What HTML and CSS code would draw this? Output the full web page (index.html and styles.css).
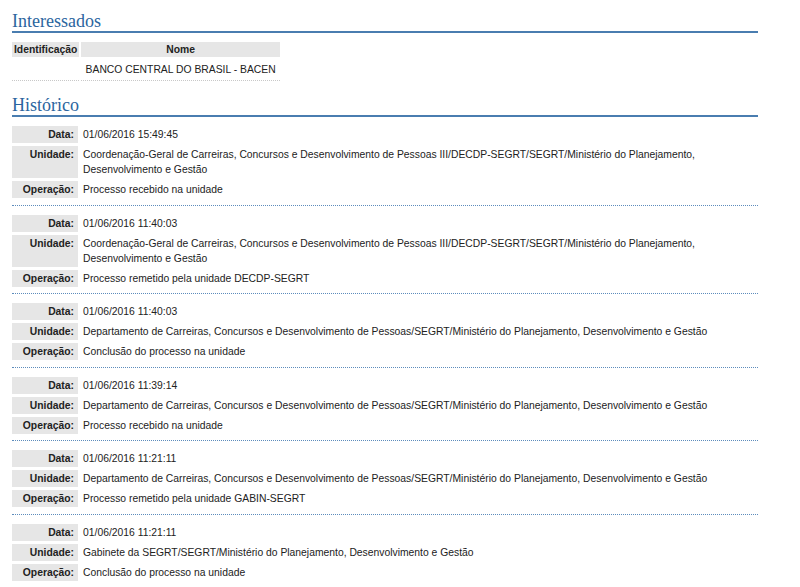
FILE: index.html
```html
<!DOCTYPE html>
<html lang="pt">
<head>
<meta charset="utf-8">
<title>Processo</title>
<link rel="stylesheet" href="styles.css">
</head>
<body>
<div class="page">
  <h2 class="section-title">Interessados</h2>
  <table class="int-table">
    <thead>
      <tr><th class="col-id">Identificação</th><th class="col-nome">Nome</th></tr>
    </thead>
    <tbody>
      <tr><td class="col-id"></td><td class="col-nome">BANCO CENTRAL DO BRASIL - BACEN</td></tr>
    </tbody>
  </table>

  <h2 class="section-title hist-title">Histórico</h2>

  <div class="entry">
    <div class="lbl">Data:</div><div class="val">01/06/2016 15:49:45</div>
    <div class="lbl">Unidade:</div><div class="val">Coordenação-Geral de Carreiras, Concursos e Desenvolvimento de Pessoas III/DECDP-SEGRT/SEGRT/Ministério do Planejamento, Desenvolvimento e Gestão</div>
    <div class="lbl">Operação:</div><div class="val">Processo recebido na unidade</div>
  </div>
  <div class="entry">
    <div class="lbl">Data:</div><div class="val">01/06/2016 11:40:03</div>
    <div class="lbl">Unidade:</div><div class="val">Coordenação-Geral de Carreiras, Concursos e Desenvolvimento de Pessoas III/DECDP-SEGRT/SEGRT/Ministério do Planejamento, Desenvolvimento e Gestão</div>
    <div class="lbl">Operação:</div><div class="val">Processo remetido pela unidade DECDP-SEGRT</div>
  </div>
  <div class="entry">
    <div class="lbl">Data:</div><div class="val">01/06/2016 11:40:03</div>
    <div class="lbl">Unidade:</div><div class="val">Departamento de Carreiras, Concursos e Desenvolvimento de Pessoas/SEGRT/Ministério do Planejamento, Desenvolvimento e Gestão</div>
    <div class="lbl">Operação:</div><div class="val">Conclusão do processo na unidade</div>
  </div>
  <div class="entry">
    <div class="lbl">Data:</div><div class="val">01/06/2016 11:39:14</div>
    <div class="lbl">Unidade:</div><div class="val">Departamento de Carreiras, Concursos e Desenvolvimento de Pessoas/SEGRT/Ministério do Planejamento, Desenvolvimento e Gestão</div>
    <div class="lbl">Operação:</div><div class="val">Processo recebido na unidade</div>
  </div>
  <div class="entry">
    <div class="lbl">Data:</div><div class="val">01/06/2016 11:21:11</div>
    <div class="lbl">Unidade:</div><div class="val">Departamento de Carreiras, Concursos e Desenvolvimento de Pessoas/SEGRT/Ministério do Planejamento, Desenvolvimento e Gestão</div>
    <div class="lbl">Operação:</div><div class="val">Processo remetido pela unidade GABIN-SEGRT</div>
  </div>
  <div class="entry">
    <div class="lbl">Data:</div><div class="val">01/06/2016 11:21:11</div>
    <div class="lbl">Unidade:</div><div class="val">Gabinete da SEGRT/SEGRT/Ministério do Planejamento, Desenvolvimento e Gestão</div>
    <div class="lbl">Operação:</div><div class="val">Conclusão do processo na unidade</div>
  </div>
</div>
</body>
</html>
```

FILE: styles.css
```css
html, body {
  margin: 0;
  padding: 0;
  background: #ffffff;
}

.page {
  width: 746px;
  margin-left: 12px;
  font-family: "Liberation Sans", Arial, sans-serif;
  font-size: 10.35px;
  color: #222222;
}

.section-title {
  margin: 11px 0 0 0;
  padding: 0;
  font-family: "Liberation Serif", "Times New Roman", serif;
  font-weight: normal;
  font-size: 18px;
  line-height: 20px;
  color: #2b659e;
  border-bottom: 2px solid #4a7db0;
}

.hist-title {
  margin-top: 14px;
}

.int-table {
  margin-top: 9px;
  border-collapse: separate;
  border-spacing: 2px 0;
  margin-left: -2px;
  width: 272px;
}

.int-table th {
  background: #e6e6e6;
  font-weight: bold;
  line-height: 15px;
  padding: 0 2px;
  color: #222222;
}

.int-table th.col-id {
  width: 61px;
}

.int-table td {
  line-height: 15px;
  padding: 5px 2px 3px 2px;
  border-bottom: 1px dotted #c8c8c8;
}

.int-table td.col-nome {
  text-align: center;
}

.entry {
  display: grid;
  grid-template-columns: 66px 1fr;
  column-gap: 2px;
  row-gap: 3px;
  padding: 9px 0 6.5px 0;
  border-bottom: 1px dotted #5d8cbc;
}

.entry:last-child {
  border-bottom: none;
}

.lbl {
  background: #e6e6e6;
  font-weight: bold;
  text-align: right;
  padding: 1px 4px 1px 0;
  line-height: 15px;
}

.val {
  padding: 1px 0 1px 3px;
  line-height: 15px;
}
```
